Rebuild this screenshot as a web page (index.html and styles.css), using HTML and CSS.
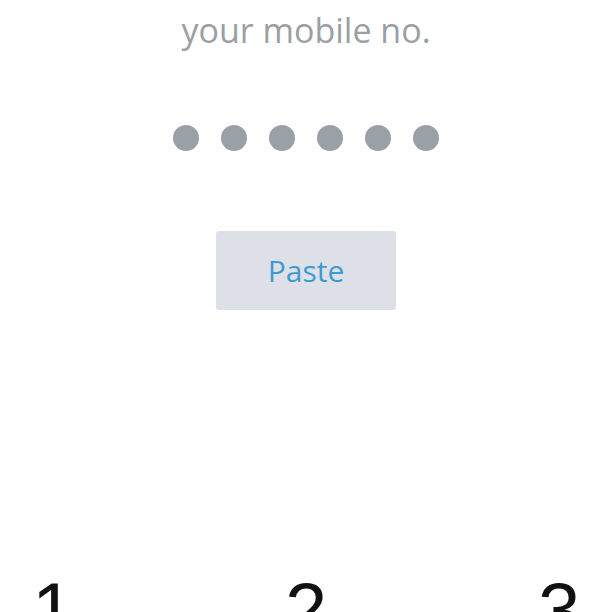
FILE: index.html
```html
<!DOCTYPE html>
<html>
<head>
<meta charset="utf-8">
<link rel="stylesheet" href="styles.css">
</head>
<body>
<div class="screen">
  <p class="subtitle">your mobile no.</p>
  <div class="dots">
    <span class="dot"></span><span class="dot"></span><span class="dot"></span>
    <span class="dot"></span><span class="dot"></span><span class="dot"></span>
  </div>
  <button class="paste">Paste</button>
  <div class="keypad">
    <span class="key">1</span>
    <span class="key">2</span>
    <span class="key">3</span>
  </div>
</div>
</body>
</html>
```
FILE: styles.css
```css
html, body {
  margin: 0;
  padding: 0;
  background: #ffffff;
}
.screen {
  width: 612px;
  height: 612px;
  overflow: hidden;
  display: flex;
  flex-direction: column;
  align-items: center;
}
.screen > * {
  flex-shrink: 0;
}
.subtitle {
  margin: 0;
  margin-top: 7px;
  font-family: "Open Sans", sans-serif;
  font-size: 34px;
  line-height: 46px;
  color: #9a9fa3;
}
.dots {
  display: flex;
  gap: 22px;
  margin-top: 72px;
}
.dot {
  width: 26px;
  height: 26px;
  border-radius: 50%;
  background: #9aa0a8;
}
.paste {
  margin-top: 80px;
  width: 180px;
  height: 79px;
  border: none;
  border-radius: 3px;
  background: #dde1e7;
  color: #3f9ad2;
  font-family: "Open Sans", sans-serif;
  font-size: 30px;
  padding: 0;
}
.keypad {
  align-self: stretch;
  display: flex;
  justify-content: space-between;
  padding: 0 32px;
  margin-top: 262px;
}
.key {
  width: 42px;
  text-align: center;
  font-family: "Liberation Sans", sans-serif;
  font-size: 76px;
  line-height: 76px;
  color: #111111;
}
```
